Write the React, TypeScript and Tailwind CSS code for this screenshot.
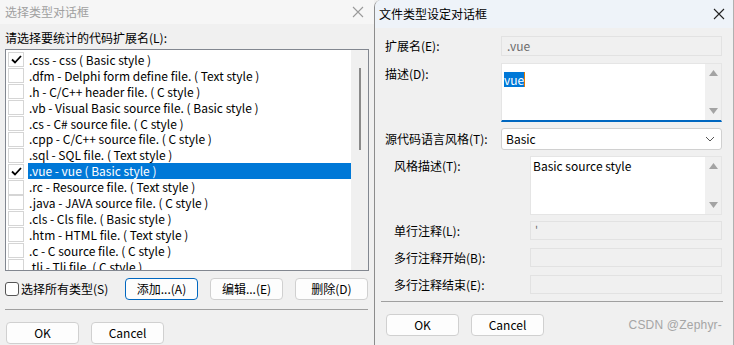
import React from "react";

const font = { fontFamily: '"Noto Sans CJK SC", "Noto Sans", sans-serif' };

const items = [
  { t: ".css - css ( Basic style )", c: true },
  { t: ".dfm - Delphi form define file. ( Text style )" },
  { t: ".h - C/C++ header file. ( C style )" },
  { t: ".vb - Visual Basic source file. ( Basic style )" },
  { t: ".cs - C# source file. ( C style )" },
  { t: ".cpp - C/C++ source file. ( C style )" },
  { t: ".sql - SQL file. ( Text style )" },
  { t: ".vue - vue ( Basic style )", c: true, sel: true },
  { t: ".rc - Resource file. ( Text style )" },
  { t: ".java - JAVA source file. ( C style )" },
  { t: ".cls - Cls file. ( Basic style )" },
  { t: ".htm - HTML file. ( Text style )" },
  { t: ".c - C source file. ( C style )" },
  { t: ".tli - Tli file. ( C style )" },
];

function CloseX({ color }: { color: string }) {
  return (
    <svg width="12" height="12" viewBox="0 0 12 12">
      <path d="M1 1 L11 11 M11 1 L1 11" stroke={color} strokeWidth="1.1" />
    </svg>
  );
}

function Check() {
  return (
    <svg width="11" height="9" viewBox="0 0 11 9">
      <path d="M1 4.5 L4 7.5 L10 1" stroke="#000" strokeWidth="1.8" fill="none" />
    </svg>
  );
}

function Btn({ label, def }: { label: string; def?: boolean }) {
  return (
    <div
      className={`w-[73px] h-[22px] rounded-[4px] bg-[#fdfdfd] flex items-center justify-center text-[12px] text-black border ${
        def ? "border-[#0067c0]" : "border-[#d0d0d0]"
      }`}
    >
      {label}
    </div>
  );
}

function ScrollArrows() {
  return (
    <div className="w-[16px] h-full bg-[#f0f0f0] flex flex-col items-center justify-between py-[6px]">
      <svg width="9" height="6" viewBox="0 0 9 6">
        <path d="M0 6 L4.5 0 L9 6 Z" fill="#a3a3a3" />
      </svg>
      <svg width="9" height="6" viewBox="0 0 9 6">
        <path d="M0 0 L4.5 6 L9 0 Z" fill="#a3a3a3" />
      </svg>
    </div>
  );
}

function Label({ text, w }: { text: string; w: string }) {
  return <div className={`${w} text-[12px] text-black leading-[18px] shrink-0`}>{text}</div>;
}

export default function App() {
  return (
    <div className="w-[734px] h-[345px] overflow-hidden flex bg-[#f0f0f0]" style={font}>
      {/* Left dialog */}
      <div className="w-[374px] shrink-0 flex flex-col">
        <div className="h-[24px] bg-[#f6f6f6] flex items-center justify-between pl-[5px] pr-[10px]">
          <span className="text-[12px] text-[#a0a0a0]">选择类型对话框</span>
          <CloseX color="#9a9a9a" />
        </div>
        <div className="px-[5px] flex flex-col">
          <div className="h-[25px] pt-[5px] text-[12px] text-black leading-[18px]">请选择要统计的代码扩展名(L):</div>
          <div className="w-[364px] h-[222px] border border-[#828790] bg-white flex overflow-hidden">
            <div className="flex-1 pt-[2px] pl-[2px] overflow-hidden">
              {items.map((it, i) => (
                <div key={i} className="h-[15.9px] flex items-center">
                  <div className="w-[16px] h-[15px] border border-[#d5d5d5] bg-white flex items-center justify-center shrink-0">
                    {it.c && <Check />}
                  </div>
                  <div
                    className={`ml-[4px] flex-1 h-[16px] pl-[1px] text-[12px] leading-[16px] whitespace-nowrap ${
                      it.sel ? "bg-[#0078d7] text-white" : "text-black"
                    }`}
                  >
                    {it.t}
                  </div>
                </div>
              ))}
            </div>
            <div className="w-[17px] bg-[#f0f0f0] shrink-0 flex justify-center pt-[18px]">
              <div className="w-[2px] h-[82px] bg-[#8a8a8a]" />
            </div>
          </div>
          <div className="h-[27px] mt-[4px] flex items-center">
            <div className="w-[14px] h-[14px] rounded-[3px] border border-[#555] bg-white" />
            <span className="ml-[2px] text-[12px] text-black w-[104px]">选择所有类型(S)</span>
            <div className="flex gap-[12px]">
              <Btn label="添加...(A)" def />
              <Btn label="编辑...(E)" />
              <Btn label="删除(D)" />
            </div>
          </div>
          <div className="mt-[7px] h-px w-[363px] bg-[#a0a0a0]" />
          <div className="mt-[12px] flex gap-[12px] pl-[1px]">
            <Btn label="OK" />
            <Btn label="Cancel" />
          </div>
        </div>
      </div>

      {/* Right dialog */}
      <div className="flex-1 flex flex-col border-l border-[#8c8c8c] rounded-tl-[7px] bg-[#f0f0f0] overflow-hidden border-r border-r-[#b0b0b0]">
        <div className="h-[28px] bg-[#eef3f9] flex items-center justify-between pl-[4px] pr-[8px]">
          <span className="text-[12px] text-black">文件类型设定对话框</span>
          <CloseX color="#222" />
        </div>
        <div className="pl-[10px] pr-[11px] flex flex-col">
          <div className="mt-[8px] flex items-center">
            <Label text="扩展名(E):" w="w-[116px]" />
            <div className="w-[221px] h-[20px] bg-[#f0f0f0] border border-[#e2e2e2] text-[12px] text-[#6d6d6d] pl-[5px] leading-[18px]">.vue</div>
          </div>
          <div className="mt-[7px] flex">
            <Label text="描述(D):" w="w-[116px] pt-[2px]" />
            <div className="w-[221px] h-[59px] bg-white border border-[#e5e5e5] border-b-2 border-b-[#0067c0] flex">
              <div className="flex-1 pl-[2px] pt-[2px]">
                <span className="bg-[#0078d7] text-white text-[12px] leading-[15px] inline-block border-r border-r-[#e07a00]">vue</span>
              </div>
              <ScrollArrows />
            </div>
          </div>
          <div className="mt-[6px] flex items-center">
            <Label text="源代码语言风格(T):" w="w-[116px]" />
            <div className="w-[221px] h-[22px] bg-white border border-[#d0d0d0] rounded-[3px] flex items-center justify-between pl-[4px] pr-[6px]">
              <span className="text-[12px] text-black">Basic</span>
              <svg width="10" height="6" viewBox="0 0 10 6">
                <path d="M1 1 L5 5 L9 1" stroke="#555" strokeWidth="1" fill="none" />
              </svg>
            </div>
          </div>
          <div className="mt-[6px] flex pl-[9px]">
            <Label text="风格描述(T):" w="w-[136px] pt-[1px]" />
            <div className="w-[192px] h-[59px] bg-white border border-[#e5e5e5] flex">
              <div className="flex-1 pl-[2px] pt-[1px] text-[12px] text-black leading-[16px]">Basic source style</div>
              <ScrollArrows />
            </div>
          </div>
          {[
            { t: "单行注释(L):", v: "'" },
            { t: "多行注释开始(B):", v: "" },
            { t: "多行注释结束(E):", v: "" },
          ].map((r, i) => (
            <div key={i} className={`${i === 0 ? "mt-[6px]" : "mt-[8px]"} flex items-center pl-[9px]`}>
              <Label text={r.t} w="w-[136px]" />
              <div className="w-[192px] h-[19px] bg-[#f0f0f0] border border-[#e2e2e2] text-[11px] text-[#707070] pl-[4px] leading-[15px]">
                {r.v}
              </div>
            </div>
          ))}
          <div className="mt-[7px] h-px w-[342px] ml-[-4px] bg-[#a0a0a0]" />
          <div className="mt-[12px] flex items-center">
            <div className="flex gap-[12px] pl-[1px]">
              <Btn label="OK" />
              <Btn label="Cancel" />
            </div>
            <span className="ml-auto text-[12px] text-[#a5a5a5] tracking-[0.2px]" style={{ fontFamily: '"Liberation Sans", Arial, sans-serif' }}>
              CSDN @Zephyr-
            </span>
          </div>
        </div>
      </div>
    </div>
  );
}
